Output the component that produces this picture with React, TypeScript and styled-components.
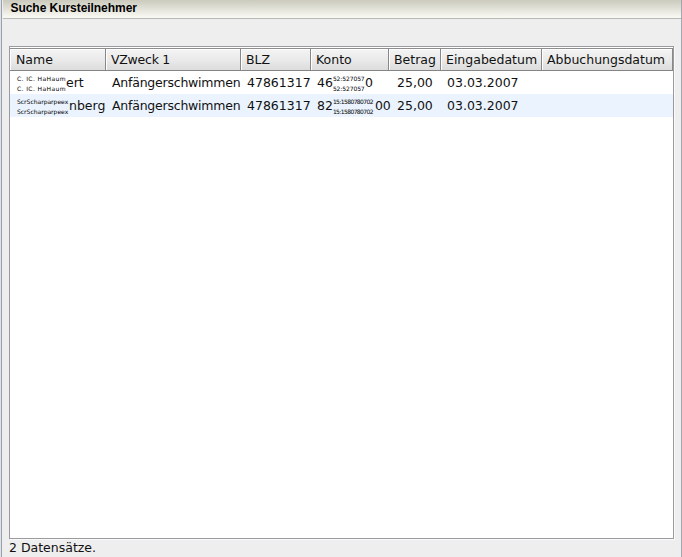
import React from "react";
import styled, { createGlobalStyle } from "styled-components";

const GlobalStyle = createGlobalStyle`
  * { box-sizing: border-box; }
  body { margin: 0; background: #eee; overflow: hidden; }
`;

const Window = styled.main`
  width: 682px;
  height: 557px;
  display: flex;
  flex-direction: column;
  border-left: 1px solid #dfe2e8;
  background: #eee;
  color: #111;
  font: 12.5px/16px "DejaVu Sans", sans-serif;
`;

const Frame = styled.div`
  flex: 1;
  min-height: 0;
  display: flex;
  flex-direction: column;
  border-left: 1px solid #9a9fab;
  border-right: 1px solid #a2a6b0;
`;

const TitleBar = styled.header`
  height: 19px;
  flex: none;
  margin-left: 1px;
  padding: 1px 0 0 7.5px;
  border-bottom: 1px solid #b9b9b5;
  background: linear-gradient(#cbcabd, #e3e2d9 50%, #f8f8f2 94%);
  color: #000;
  font: bold 12px/15px "Liberation Sans", sans-serif;
  letter-spacing: -0.05px;
`;

const TableBox = styled.section`
  width: 665px;
  height: 493px;
  flex: none;
  margin: 27px 0 0 7px;
  padding: 1px 0 0;
  border: 1px solid #9a9a9f;
  background: #fff;
  box-shadow: 1px 1px 0 #fafafa;
`;

const Row = styled.div<{ $tinted?: boolean }>`
  display: grid;
  grid-template-columns: 96px 135px 70px 78px 52px 101px 131px;
  height: 23px;
  background: ${(p) => (p.$tinted ? "#ebf4fe" : "#fff")};
`;

const HeaderCell = styled.div<{ $inset?: number; $spacing?: number }>`
  height: 23px;
  padding: 3px 0 0 ${(p) => p.$inset ?? 5}px;
  border-top: 1px solid #8e8e8e;
  border-right: 1px solid #888;
  border-bottom: 1px solid #858585;
  box-shadow: inset 1px 1px 0 #fff;
  background: linear-gradient(#f4f4f4, #e9e9e9 55%, #dcdcdc);
  letter-spacing: ${(p) => p.$spacing ?? 0}px;
  white-space: nowrap;
`;

const Cell = styled.div<{ $inset?: number; $spacing?: number }>`
  display: flex;
  align-items: flex-start;
  padding: 4px 0 0 ${(p) => p.$inset ?? 6}px;
  letter-spacing: ${(p) => p.$spacing ?? 0}px;
  white-space: nowrap;
  min-width: 0;
`;

const Masked = styled.span<{ $width: number; $spacing: number }>`
  width: ${(p) => p.$width}px;
  display: flex;
  flex: none;
  flex-direction: column;
  margin-top: -1px;
  color: #000;
  font-size: 6px;
  line-height: 10px;
  letter-spacing: ${(p) => p.$spacing}px;
`;

const Status = styled.footer`
  padding: 1px 0 0 7px;
`;

function Mask({ text, width, spacing }: { text: string; width: number; spacing: number }) {
  return (
    <Masked $width={width} $spacing={spacing}>
      <span>{text}</span>
      <span>{text}</span>
    </Masked>
  );
}

const columns = [
  { label: "Name", inset: 6 },
  { label: "VZweck 1", spacing: -0.25 },
  { label: "BLZ" },
  { label: "Konto" },
  { label: "Betrag" },
  { label: "Eingabedatum" },
  { label: "Abbuchungsdatum" },
];

const records = [
  {
    name: { mask: "C. IC. HaHaum", width: 49, spacing: 0.4, inset: 7, end: "ert" },
    account: { start: "46", mask: "52:527057", width: 32, spacing: -0.1, end: "0" },
  },
  {
    name: { mask: "ScrScharparpeex", width: 52, spacing: 0, inset: 7, end: "nberg" },
    account: { start: "82", mask: "15:1580780702", width: 42, spacing: -0.6, end: "00" },
  },
];

export default function App() {
  return (
    <>
      <GlobalStyle />
      <Window>
        <Frame>
          <TitleBar>Suche Kursteilnehmer</TitleBar>
          <TableBox>
            <Row>
              {columns.map(({ label, inset, spacing }) => (
                <HeaderCell key={label} $inset={inset} $spacing={spacing}>
                  {label}
                </HeaderCell>
              ))}
            </Row>
            {records.map(({ name, account }, index) => (
              <Row key={name.end} $tinted={index % 2 === 1}>
                <Cell $inset={name.inset}>
                  <Mask text={name.mask} width={name.width} spacing={name.spacing} />
                  {name.end}
                </Cell>
                <Cell $spacing={-0.22}>Anfängerschwimmen</Cell>
                <Cell>47861317</Cell>
                <Cell>
                  {account.start}
                  <Mask text={account.mask} width={account.width} spacing={account.spacing} />
                  {account.end}
                </Cell>
                <Cell $inset={8}>25,00</Cell>
                <Cell>03.03.2007</Cell>
                <Cell />
              </Row>
            ))}
          </TableBox>
          <Status>2 Datensätze.</Status>
        </Frame>
      </Window>
    </>
  );
}
